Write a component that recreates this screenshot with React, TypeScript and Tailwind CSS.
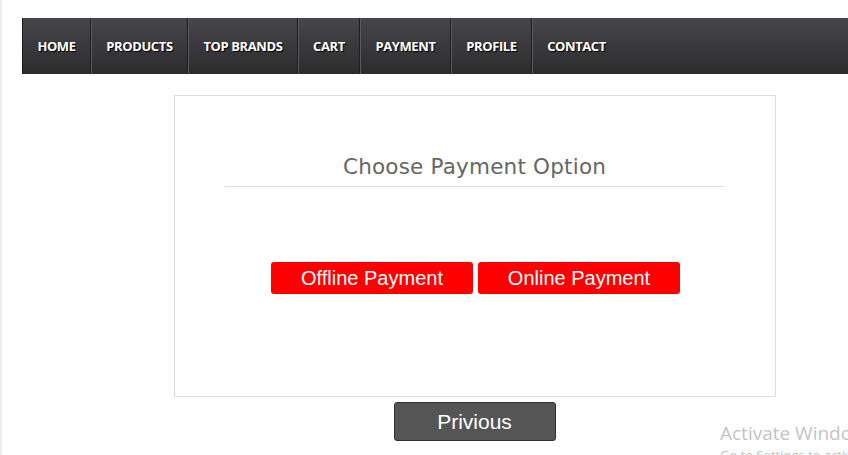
const navItems = [
  { label: "HOME", w: "w-[68px]" },
  { label: "PRODUCTS", w: "w-[97px]" },
  { label: "TOP BRANDS", w: "w-[110px]" },
  { label: "CART", w: "w-[62px]" },
  { label: "PAYMENT", w: "w-[91px]" },
  { label: "PROFILE", w: "w-[81px]" },
  { label: "CONTACT", w: "w-[88px]" },
];

const App = () => {
  return (
    <div className="relative w-[848px] h-[455px] overflow-hidden bg-white border-l-2 border-[#ececec]">
      <div className="ml-[20px] w-[905px] pt-[18px]">
        {/* Top navigation */}
        <nav className="flex h-[56px] bg-gradient-to-b from-[#47464b] to-[#2c2c2f] border-l border-[#1c1c1c]">
          {navItems.map((item, i) => (
            <div
              key={item.label}
              className={`${item.w} flex items-center justify-center pt-[2px] ${i < navItems.length - 1 ? "border-r border-[#1e1e1e]" : ""} ${i > 0 ? "border-l border-l-[#5a5a5e]" : ""}`}
            >
              <span
                className="text-white text-[13px] font-bold tracking-[-0.4px] [text-shadow:1px_1px_1px_#000]"
                style={{ fontFamily: '"Open Sans", sans-serif' }}
              >
                {item.label}
              </span>
            </div>
          ))}
        </nav>

        {/* Payment card */}
        <div className="mt-[21px] mx-auto w-[602px] h-[302px] border border-[#dddddd] bg-white">
          <h2
            className="pt-[56px] pb-[4px] mx-[50px] border-b border-[#dddddd] text-center text-[21.5px] leading-[30px] text-[#666666] tracking-[0.2px]"
            style={{ fontFamily: '"DejaVu Sans", sans-serif' }}
          >
            Choose Payment Option
          </h2>
          <div className="mt-[75px] pl-[2px] flex justify-center gap-[5px]">
            <button
              className="w-[202px] h-[32px] bg-[#ff0000] rounded-[3px] text-white text-[20px]"
              style={{ fontFamily: '"Liberation Sans", Arial, sans-serif' }}
            >
              Offline Payment
            </button>
            <button
              className="w-[202px] h-[32px] bg-[#ff0000] rounded-[3px] text-white text-[20px]"
              style={{ fontFamily: '"Liberation Sans", Arial, sans-serif' }}
            >
              Online Payment
            </button>
          </div>
        </div>

        <div className="mt-[5px] flex justify-center">
          <button
            className="w-[162px] h-[39px] bg-[#555555] border border-[#333333] rounded-[3px] text-white text-[21px]"
            style={{ fontFamily: '"Liberation Sans", Arial, sans-serif' }}
          >
            Privious
          </button>
        </div>
      </div>

      {/* Windows activation watermark */}
      <div
        className="absolute left-[718px] top-[419px] text-[#c4c4c4] whitespace-nowrap"
        style={{ fontFamily: '"Open Sans", sans-serif' }}
      >
        <div className="text-[19px] leading-[28px]">Activate Windows</div>
        <div className="text-[13px] leading-[16px]">Go to Settings to activate Windows.</div>
      </div>
    </div>
  );
};

export default App;
